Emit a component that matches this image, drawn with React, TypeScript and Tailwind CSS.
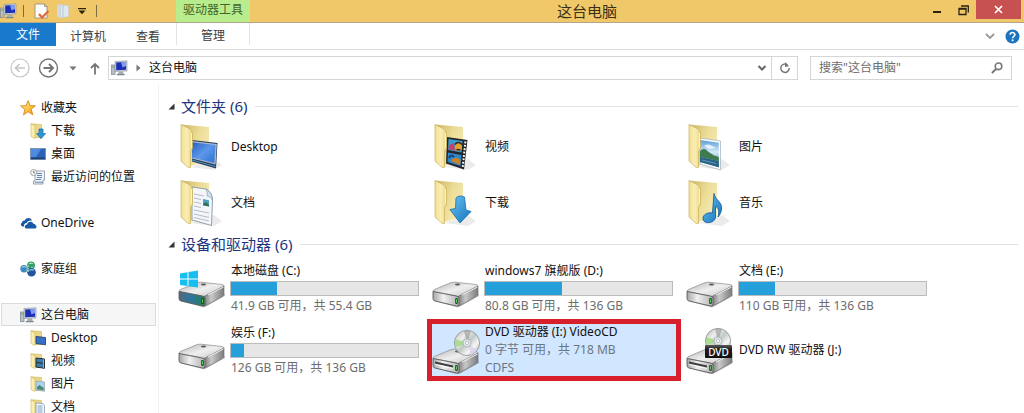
import type { ReactNode } from "react";

/* ---------- small icons ---------- */

function PcIcon() {
  return (
    <svg width="17" height="16" viewBox="0 0 17 16" className="shrink-0" aria-hidden="true">
      <rect x="0.5" y="5" width="3.5" height="9.5" fill="#b9bfc6" stroke="#7d858e" strokeWidth="0.7" />
      <rect x="1.3" y="6.5" width="2" height="1" fill="#5aa84e" />
      <path d="M4 1.5 16 0.8V11L4 11.5Z" fill="#c9ced6" stroke="#8c94a0" strokeWidth="0.6" />
      <path d="M5.2 2.6 15 2V9.8L5.2 10.3Z" fill="#1c2fb4" />
      <path d="M10 2.3 15 2V6L11.5 7.5Z" fill="#7f9cf0" />
      <path d="M8 11.4h4l.8 2.6H6.8Z" fill="#a7adb5" />
      <path d="M5.5 14h8.5l-.8 1.3H6Z" fill="#7e8791" />
    </svg>
  );
}

function StarIcon() {
  return (
    <svg width="17" height="16" viewBox="0 0 17 16" className="shrink-0" aria-hidden="true">
      <defs>
        <linearGradient id="star" x1="0" y1="0" x2="1" y2="1">
          <stop offset="0" stopColor="#fff2a8" />
          <stop offset="0.55" stopColor="#fbc440" />
          <stop offset="1" stopColor="#ef8f1d" />
        </linearGradient>
      </defs>
      <path d="M8.2.7 10 5.6l5.400.2-4.200 3.400 1.600 5.600-4.700-3.100-4.600 3.200 1.400-5.500L.6 6l5.500-.4Z" fill="url(#star)" stroke="#d9861f" strokeWidth="0.9" strokeLinejoin="round" />
    </svg>
  );
}

function DesktopIcon() {
  return (
    <svg width="16" height="16" viewBox="0 0 16 16" className="shrink-0" aria-hidden="true">
      <rect x="0.5" y="2.5" width="15" height="11" fill="#2c62b8" stroke="#7d93b3" />
      <path d="M1 3h10L6 11H1Z" fill="#4f8be0" />
      <rect x="1" y="11.5" width="14" height="1.7" fill="#1d3f73" />
    </svg>
  );
}

function RecentIcon() {
  return (
    <svg width="16" height="16" viewBox="0 0 16 16" className="shrink-0" aria-hidden="true">
      <path d="M4 2h10.5v9H13v4H3.5v-3H5V5Z" fill="#f1f4f8" stroke="#8e98a5" strokeWidth="0.9" />
      <path d="M7 4.500h5M7 6.500h5M7 8.500h5M6 10.500h5M5 13.200h8" stroke="#5078a8" strokeWidth="0.9" />
      <circle cx="3.6" cy="3.6" r="3" fill="#f7f7f7" stroke="#9a9a9a" strokeWidth="0.9" />
      <path d="M3.600 2v1.800h1.400" stroke="#555" strokeWidth="0.8" fill="none" />
    </svg>
  );
}

function CloudIcon() {
  return (
    <svg width="17" height="16" viewBox="0 0 17 16" className="shrink-0" aria-hidden="true">
      <path d="M2.600 11.500C.6 11.200.2 8.600 2 7.800 2 5.800 3.800 5.200 4.800 5.500 6.300 2.300 11 2.300 12 5.700 9.500 4.800 7.300 6 6.800 7.900 4.700 7.700 3.600 9.700 4.100 11.500Z" fill="#1657a6" />
      <path d="M6.300 13.500c-2.300-.3-2-3.900.8-4.100.6-3.300 5.200-3.600 6.200-.7 1.900-.1 2.300 1.100 2.300 1.700 1.700.8 1 3-.7 3.100Z" fill="#1657a6" />
    </svg>
  );
}

function HomegroupIcon() {
  return (
    <svg width="17" height="16" viewBox="0 0 17 16" className="shrink-0" aria-hidden="true">
      <circle cx="11" cy="4.300" r="3.900" fill="#2f9a63" />
      <circle cx="4" cy="7.800" r="3.700" fill="#3f86c6" />
      <circle cx="11.500" cy="11.200" r="4.300" fill="#23549c" />
      <path d="M6 6.500 9 4.500M6.500 9l2.600 1.200M12 7V5.500" stroke="#9adbb4" strokeWidth="1.500" />
      <path d="M9 3c1.200-1.200 3-1.200 4 0M1.800 6.500c.9-1 2.500-1.200 3.600-.4" stroke="#d6f2e2" fill="none" />
      <path d="M9.500 9.500c1-1.200 3.200-1.300 4.400-.2" stroke="#8fc0ef" strokeWidth="1.200" fill="none" />
    </svg>
  );
}

type Kind = "desktop" | "video" | "picture" | "document" | "download" | "music";

function MiniFolder({ kind }: { kind: Kind }) {
  return (
    <svg width="16" height="16" viewBox="0 0 16 16" className="shrink-0" aria-hidden="true">
      <path d="M1 .8 11.500 1.500V14.500H4Z" fill="#ead88a" stroke="#cdb55c" strokeWidth="0.6" />
      <path d="M1 .8 5 3V15.500L1 13.500Z" fill="#fbeeb0" stroke="#cdb55c" strokeWidth="0.6" />
      {kind === "desktop" && <path d="M6 6.500 15.500 7.500V14.800L6 13.500Z" fill="#3470c4" stroke="#27466f" strokeWidth="0.9" />}
      {kind === "video" && (
        <>
          <path d="M6 5 14.500 6V15.300L6 14Z" fill="#3c7ca8" stroke="#23282e" />
          <path d="M13.600 6.500v8.500" stroke="#f2f2f2" strokeWidth="1" strokeDasharray="1 1" />
          <path d="M6.500 9.600 13 10.300" stroke="#23282e" />
        </>
      )}
      {kind === "picture" && (
        <>
          <path d="M6 5 14.500 6V15.300L6 14Z" fill="#a9d3ee" stroke="#9aa6b0" strokeWidth="0.8" />
          <path d="M7 11l2.500-2 4.200 3v2.200L7 13.300Z" fill="#4b8a6f" />
        </>
      )}
      {kind === "document" && (
        <>
          <path d="M6 4 13 4.500 14.500 6.500V15.500L6 14.500Z" fill="#f5f8fc" stroke="#8a97a8" strokeWidth="0.8" />
          <path d="M7.500 7h5M7.500 9h5M7.500 11h5M7.500 13h5" stroke="#6e97c8" strokeWidth="0.9" />
        </>
      )}
      {kind === "download" && <path d="M9 6h4v4.500h2.600L11 15.800 6.500 10.500H9Z" fill="#2c95d8" stroke="#1a6aa8" strokeWidth="0.7" />}
    </svg>
  );
}

/* ---------- large icons ---------- */

function IconDefs() {
  return (
    <svg width="0" height="0" className="absolute" aria-hidden="true">
      <defs>
        <linearGradient id="folderFront" x1="0" y1="0" x2="1" y2="0">
          <stop offset="0" stopColor="#f3df8e" />
          <stop offset="0.5" stopColor="#faedb4" />
          <stop offset="1" stopColor="#ecd682" />
        </linearGradient>
        <linearGradient id="folderBack" x1="0" y1="0" x2="1" y2="0.6">
          <stop offset="0" stopColor="#c9b468" />
          <stop offset="0.55" stopColor="#ecdc94" />
          <stop offset="1" stopColor="#f5eab5" />
        </linearGradient>
        <linearGradient id="screen" x1="0" y1="0" x2="1" y2="1">
          <stop offset="0" stopColor="#2a5fc0" />
          <stop offset="0.5" stopColor="#5c98ea" />
          <stop offset="1" stopColor="#2e6fd2" />
        </linearGradient>
        <linearGradient id="blueFill" x1="0" y1="0" x2="1" y2="1">
          <stop offset="0" stopColor="#6cc4f0" />
          <stop offset="1" stopColor="#1273bd" />
        </linearGradient>
        <linearGradient id="sky" x1="0" y1="0" x2="0" y2="1">
          <stop offset="0" stopColor="#5b9bd8" />
          <stop offset="0.45" stopColor="#d4ebf8" />
          <stop offset="1" stopColor="#2c6b93" />
        </linearGradient>
        <linearGradient id="driveTop" x1="0" y1="0" x2="1" y2="1">
          <stop offset="0" stopColor="#b4b4b4" />
          <stop offset="0.5" stopColor="#efefef" />
          <stop offset="1" stopColor="#c4c4c4" />
        </linearGradient>
        <linearGradient id="driveSide" x1="0" y1="0" x2="1" y2="0">
          <stop offset="0" stopColor="#6f6f6f" />
          <stop offset="0.4" stopColor="#c8c8c8" />
          <stop offset="1" stopColor="#7c7c7c" />
        </linearGradient>
        <linearGradient id="driveFront" x1="0" y1="0" x2="1" y2="0">
          <stop offset="0" stopColor="#a6a6a6" />
          <stop offset="0.4" stopColor="#f0f0f0" />
          <stop offset="1" stopColor="#b0b0b0" />
        </linearGradient>
        <linearGradient id="systemFront" x1="0" y1="0" x2="1" y2="0">
          <stop offset="0" stopColor="#55697a" />
          <stop offset="0.45" stopColor="#2b78a0" />
          <stop offset="1" stopColor="#2f7a55" />
        </linearGradient>
        <linearGradient id="disc" x1="0" y1="0" x2="1" y2="1">
          <stop offset="0" stopColor="#b4b4b4" />
          <stop offset="0.3" stopColor="#ededed" />
          <stop offset="0.5" stopColor="#c0cac3" />
          <stop offset="0.7" stopColor="#f6f6f6" />
          <stop offset="1" stopColor="#a2a2a2" />
        </linearGradient>
        <linearGradient id="discLabel" x1="0" y1="0" x2="0" y2="1">
          <stop offset="0" stopColor="#5a5a5a" />
          <stop offset="0.35" stopColor="#1d1d1d" />
          <stop offset="1" stopColor="#101010" />
        </linearGradient>
      </defs>
    </svg>
  );
}

function FolderIcon({ kind }: { kind: Kind }) {
  return (
    <svg width="48" height="48" viewBox="0 0 48 48" className="shrink-0" aria-hidden="true">
      <path d="M12 44 36 36 44 42 36 47Z" fill="#000" opacity="0.08" />
      <path d="M3 1.500 31 4V38L12 43Z" fill="url(#folderBack)" />
      {kind === "desktop" && (
        <>
          <path d="M14 17 39.500 20 38 45.500 14 38.500Z" fill="#2c3d57" />
          <path d="M14 18 38.800 21 37.500 41.500 14 35.500Z" fill="#a9bcd6" />
          <path d="M14 19.200 37.500 22 36.300 40 14 34.500Z" fill="url(#screen)" />
          <path d="M14 37 37.500 43.500" stroke="#4fb0d8" strokeWidth="0.8" />
        </>
      )}
      {kind === "document" && (
        <>
          <path d="M14 8 28 10Q34 13 34.500 21L33.500 46.500 14 41Z" fill="#f4f6fa" stroke="#8796a6" strokeWidth="0.9" />
          <path d="M28 10Q30 14 29 17 33 17 34.500 21 34 13 28 10Z" fill="#cfe0ee" stroke="#8796a6" strokeWidth="0.6" />
          <path d="M16 15 26 17M16 19 23 20.500M16 23 23 24.500M16 27 23 28.500M16 31 31 34M16 35 31 38.500M16 38.500 31 42" stroke="#b8bec9" strokeWidth="1.200" />
          <path d="M25 20 31 21.200V27.500L25 26.200Z" fill="#4e9fc4" />
          <path d="M25 25 28 23 31 26V27.500L25 26.200Z" fill="#2f7358" />
        </>
      )}
      {kind === "video" && (
        <>
          <path d="M15 14 35.500 17 32 46.500 14 40.500Z" fill="#23262b" />
          <path d="M16.500 16 30.500 18 29.500 29.500 16 27Z" fill="#3b9ad0" />
          <path d="M16 29.500 29.500 32 28.500 43 15.500 39Z" fill="#2f86c8" />
          <path d="M17 22 22 20 23 27.500 16.500 26.500Z" fill="#c0436b" />
          <ellipse cx="26.500" cy="24" rx="3.600" ry="4" fill="#e2a32f" />
          <path d="M23 21.500c2-3 5-2.500 7 0M24.500 26.500l4 .5" stroke="#3a2516" strokeWidth="1.500" fill="none" />
          <path d="M19 38c2-4 6-4 9.500-1l-.5 5Z" fill="#c98427" />
          <path d="M17 35c1.500-3 3-3 5-1" stroke="#173c6b" strokeWidth="1.800" fill="none" />
          <path d="M33.400 18.500 30.700 44.500" stroke="#fff" strokeWidth="2" strokeDasharray="1.800 1.600" />
        </>
      )}
      {kind === "picture" && (
        <>
          <path d="M14 15 34.500 18V47L14 41Z" fill="#fcfdfe" stroke="#a9b6c2" strokeWidth="0.8" />
          <path d="M14 17 32.800 19.800V44.300L14 39Z" fill="url(#sky)" />
          <path d="M14 28Q18 24 22 28.500L28 32.500 32.800 34V38L14 34Z" fill="#3f7b50" />
          <path d="M18 23q4-3 8 0l4 2-7 1Z" fill="#fff" opacity="0.75" />
          <path d="M14 34 32.800 38V44.300L14 39Z" fill="#2a6386" />
          <path d="M16 37 30 40.500" stroke="#6aaac8" strokeWidth="0.8" />
        </>
      )}
      {kind === "download" && (
        <path d="M24 19Q27 15.500 32.500 18L34 31 39 32.500 28 44 18 30.500 23.500 29.500Z" fill="url(#blueFill)" stroke="#1b6dab" strokeWidth="0.8" strokeLinejoin="round" />
      )}
      {kind === "music" && (
        <path d="M28 14.500C29 21 36.500 23 35.500 30 35.200 33 34 36 32 38 33.500 32 32.500 28.500 29.500 27.500L29.500 38C29.500 44 18 46 17 40 16.500 35.500 22 33 26.500 34Z" fill="url(#blueFill)" stroke="#195f9b" strokeWidth="0.9" strokeLinejoin="round" />
      )}
      <path d="M3 1.500 11 5.500Q14.500 7.500 14.500 11V25Q14.500 27 12.500 28V44.500Q11 45.500 9 43.500L3 38Z" fill="url(#folderFront)" stroke="#c9b25f" strokeWidth="0.7" />
      <path d="M13.500 10V25" stroke="#fff8d5" strokeWidth="0.8" />
    </svg>
  );
}

type DriveKind = "system" | "disk" | "dvd" | "dvdrw";

function DriveIcon({ kind }: { kind: DriveKind }) {
  const optical = kind === "dvd" || kind === "dvdrw";
  const discX = kind === "dvd" ? 35 : 32;
  const discY = kind === "dvd" ? 17 : 15;
  return (
    <svg width="48" height="48" viewBox="0 0 48 48" className="shrink-0" aria-hidden="true">
      <g transform={optical ? "translate(0 5)" : undefined}>
        <path d="M2 37 26 43.500 47 32V30L26 39Z" fill="#000" opacity="0.25" />
        <path d="M1 27.500Q1 26 3 25.300L18 19Q20 18 23 18.200L44 20.500Q46.500 21 46 22.500L27 32.500Z" fill="url(#driveTop)" stroke="#8b8b8b" strokeWidth="0.7" />
        <path d="M26 32.500 46 22V30Q46 31.500 44.500 32.300L29 41Q27 42.300 25 42Z" fill="url(#driveSide)" stroke="#666" strokeWidth="0.6" />
        <path d="M1 27.500 24 32Q27 32.500 27 34.500V40Q27 42.500 24.500 42L3 37Q1 36.500 1 34.500Z" fill={kind === "system" ? "url(#systemFront)" : "url(#driveFront)"} stroke="#5b5b5b" strokeWidth="0.9" />
        <path d="M30 31 45.500 23" stroke="#f8f8f8" strokeWidth="0.9" />
        <ellipse cx="25.500" cy="20.500" rx="2.600" ry="1" fill="#5a5a5a" />
        <rect x="23.200" y="34" width="2.600" height="6" rx="1" fill="#1c4a22" />
        <path d="M24.500 35.200v3.500" stroke="#56d34f" strokeWidth="1" />
        {optical && (
          <>
            <path d="M3 30.500 21 34.500V36.500L3 32.500Z" fill="#3b3b3b" />
            <path d="M3 33.500 21 37.500" stroke="#fff" strokeWidth="0.8" />
          </>
        )}
      </g>
      {kind === "system" && (
        <path d="M2 9.500 9.500 8.300V14.500H2ZM10.500 8.100 20 6.500V14.500H10.500ZM2 15.500H9.500V22L2 21ZM10.500 15.500H20V23.500L10.500 22.200Z" fill="#17bff0" />
      )}
      {optical && (
        <g>
          <circle cx={discX} cy={discY} r="12.600" fill="url(#disc)" stroke="#8e8e8e" strokeWidth="0.8" />
          <path d={`M${discX} ${discY}L${discX - 11.5} ${discY - 4}A12.500 12.500 0 0 0 ${discX - 11.5} ${discY + 4}Z`} fill="#8ed86f" opacity="0.7" />
          <path d={`M${discX} ${discY}L${discX - 3} ${discY - 12}A12.500 12.500 0 0 1 ${discX + 4} ${discY - 12}Z`} fill="#8d8d8d" opacity="0.55" />
          <path d={`M${discX} ${discY}L${discX + 4} ${discY + 12}A12.500 12.500 0 0 0 ${discX + 10} ${discY + 7}Z`} fill="#dcd0f0" opacity="0.8" />
          <circle cx={discX} cy={discY} r="4" fill="#e3e6ea" stroke="#a3a8ad" strokeWidth="0.7" />
          <circle cx={discX} cy={discY} r="1.600" fill="#fff" stroke="#9ba0a6" strokeWidth="0.6" />
        </g>
      )}
      {kind === "dvdrw" && (
        <g>
          <rect x="19" y="19" width="27" height="13" rx="1" fill="url(#discLabel)" />
          <text x="32.500" y="29.500" textAnchor="middle" fontSize="10" fontWeight="500" fill="#fff" fontFamily="Noto Sans, sans-serif">DVD</text>
        </g>
      )}
    </svg>
  );
}

/* ---------- data ---------- */

type NavRow = { label: string; icon: ReactNode; child?: boolean; selected?: boolean };

const navGroups: NavRow[][] = [
  [
    { label: "收藏夹", icon: <StarIcon /> },
    { label: "下载", icon: <MiniFolder kind="download" />, child: true },
    { label: "桌面", icon: <DesktopIcon />, child: true },
    { label: "最近访问的位置", icon: <RecentIcon />, child: true },
  ],
  [{ label: "OneDrive", icon: <CloudIcon /> }],
  [{ label: "家庭组", icon: <HomegroupIcon /> }],
  [
    { label: "这台电脑", icon: <PcIcon />, selected: true },
    { label: "Desktop", icon: <MiniFolder kind="desktop" />, child: true },
    { label: "视频", icon: <MiniFolder kind="video" />, child: true },
    { label: "图片", icon: <MiniFolder kind="picture" />, child: true },
    { label: "文档", icon: <MiniFolder kind="document" />, child: true },
  ],
];

const folders: { label: string; kind: Kind }[] = [
  { label: "Desktop", kind: "desktop" },
  { label: "视频", kind: "video" },
  { label: "图片", kind: "picture" },
  { label: "文档", kind: "document" },
  { label: "下载", kind: "download" },
  { label: "音乐", kind: "music" },
];

type Drive = { label: string; kind: DriveKind; used?: number; lines?: string[]; selected?: boolean };

const drives: Drive[] = [
  { label: "本地磁盘 (C:)", kind: "system", used: 24.5, lines: ["41.9 GB 可用，共 55.4 GB"] },
  { label: "windows7 旗舰版 (D:)", kind: "disk", used: 41, lines: ["80.8 GB 可用，共 136 GB"] },
  { label: "文档 (E:)", kind: "disk", used: 19, lines: ["110 GB 可用，共 136 GB"] },
  { label: "娱乐 (F:)", kind: "disk", used: 7, lines: ["126 GB 可用，共 136 GB"] },
  { label: "DVD 驱动器 (I:) VideoCD", kind: "dvd", lines: ["0 字节 可用，共 718 MB", "CDFS"], selected: true },
  { label: "DVD RW 驱动器 (J:)", kind: "dvdrw" },
];

/* ---------- parts ---------- */

function TitleBar() {
  return (
    <header className="flex h-[23px] shrink-0 items-stretch border-b border-[#b5a689] bg-[#f0c869]">
      <div className="flex w-44 items-center">
        <PcIcon />
        <span className="ml-1.5 h-3 w-px bg-[#7c6c43]" />
        <button aria-label="属性" className="ml-2.5">
          <svg width="16" height="16" viewBox="0 0 16 16">
            <path d="M1 1h9.500L13 3.500V15H1Z" fill="#fdfdfd" stroke="#8d8777" strokeWidth="0.8" />
            <path d="M10.500 1v2.500H13" fill="none" stroke="#8d8777" strokeWidth="0.8" />
            <path d="M5 11l3 3.500L14.500 8" fill="none" stroke="#dd6b35" strokeWidth="2.200" />
          </svg>
        </button>
        <button aria-label="新建文件夹" className="ml-1.5">
          <svg width="14" height="16" viewBox="0 0 14 16">
            <path d="M1 1.500 5 1V15L1 13.500Z" fill="#cfd9e0" />
            <path d="M4.500 2 12.500 2.500V13.500L4.500 15Z" fill="#dfe8ee" stroke="#c3cdd3" strokeWidth="0.6" />
            <path d="M7 2v12" stroke="#b5c8d6" />
          </svg>
        </button>
        <button aria-label="自定义快速访问工具栏" className="ml-2">
          <svg width="8" height="8" viewBox="0 0 8 8">
            <path d="M0 1h8v1.200H0ZM.5 3.500h7L4 7.200Z" fill="#2a2312" />
          </svg>
        </button>
        <span className="ml-2.5 h-3 w-px bg-[#7c6c43]" />
      </div>
      <div className="flex w-[74px] items-center justify-center bg-[#b9ec8c] pb-0.5 text-[#41652d]">驱动器工具</div>
      <h1 className="flex flex-1 items-center justify-center text-[15px] leading-5 text-[#3b3014]">这台电脑</h1>
      <div className="flex items-start pr-[3px]">
        <button aria-label="最小化" className="flex h-5 w-[26px] items-center justify-center">
          <svg width="10" height="10" viewBox="0 0 10 10"><path d="M1 6h8v2H1Z" fill="#2a2312" /></svg>
        </button>
        <button aria-label="还原" className="flex h-5 w-[26px] items-center justify-center">
          <svg width="11" height="11" viewBox="0 0 11 11"><path d="M1 3.500h7v6H1ZM1 4h7M3 1h7.300v6.500" fill="none" stroke="#2a2312" strokeWidth="1.300" /></svg>
        </button>
        <button aria-label="关闭" className="flex h-[19px] w-[45px] items-center justify-center bg-[#c75150]">
          <svg width="9" height="9" viewBox="0 0 9 9"><path d="M1 1l7 7M8 1 1 8" stroke="#fff" strokeWidth="1.700" /></svg>
        </button>
      </div>
    </header>
  );
}

function RibbonTabs() {
  return (
    <nav className="flex h-[27px] shrink-0 items-stretch border-b border-[#dcdddf] text-[#3c3c3c]">
      <button className="h-[23px] w-14 bg-[#1979ca] text-white">文件</button>
      <button className="w-16 pt-0.5">计算机</button>
      <button className="w-14 pt-0.5">查看</button>
      <button className="mb-1 w-[74px] border-x border-[#e3e3e3] pt-1">管理</button>
      <div className="ml-auto flex items-center gap-2.5 pr-1">
        <button aria-label="展开功能区">
          <svg width="10" height="8" viewBox="0 0 10 8"><path d="M1 2 5 6 9 2" fill="none" stroke="#999" strokeWidth="1.900" /></svg>
        </button>
        <button aria-label="帮助">
          <svg width="15" height="15" viewBox="0 0 15 15">
            <circle cx="7.500" cy="7.500" r="7" fill="#1b74bf" />
            <path d="M5.200 5.800C5.200 2.800 9.900 2.900 9.900 5.600 9.900 7.400 7.600 7.300 7.600 9.300" fill="none" stroke="#fff" strokeWidth="1.600" />
            <rect x="6.700" y="10.400" width="1.800" height="1.800" fill="#fff" />
          </svg>
        </button>
      </div>
    </nav>
  );
}

function AddressRow() {
  return (
    <div className="flex shrink-0 items-center pt-1.5 pr-3 pb-1 pl-2.5">
      <button aria-label="后退">
        <svg width="20" height="20" viewBox="0 0 20 20" fill="none" stroke="#c6c6c6">
          <circle cx="10" cy="10" r="9" strokeWidth="1.200" />
          <path d="M15 10H5.500M9.500 6l-4 4 4 4" strokeWidth="1.700" />
        </svg>
      </button>
      <button aria-label="前进" className="ml-2">
        <svg width="21" height="20" viewBox="0 0 21 20" fill="none" stroke="#747474">
          <circle cx="10.500" cy="10" r="9" strokeWidth="1.400" />
          <path d="M5.500 10H15M11 6l4 4-4 4" strokeWidth="1.900" />
        </svg>
      </button>
      <button aria-label="最近浏览的位置" className="ml-2.5">
        <svg width="8" height="5" viewBox="0 0 8 5"><path d="M.5.5h7L4 4.500Z" fill="#777" /></svg>
      </button>
      <button aria-label="上移" className="ml-3">
        <svg width="12" height="13" viewBox="0 0 12 13"><path d="M6 12.500V2M2 6l4-4 4 4" fill="none" stroke="#777" strokeWidth="1.800" /></svg>
      </button>
      <div className="ml-[7px] flex h-6 flex-1 items-center border border-[#d6d6d6] pl-0.5">
        <PcIcon />
        <svg width="5" height="8" viewBox="0 0 5 8" className="ml-2" aria-hidden="true"><path d="M.5.500 4.500 4 .5 7.500Z" fill="#777" /></svg>
        <a href="#pc" className="ml-2 flex-1 text-[#111]">这台电脑</a>
        <button aria-label="以前的位置" className="mr-1">
          <svg width="10" height="8" viewBox="0 0 10 8"><path d="M1.500 2 5 5.500 8.500 2" fill="none" stroke="#666" strokeWidth="2" /></svg>
        </button>
        <button aria-label="刷新" className="flex w-[26px] items-center justify-center self-stretch border-l border-[#d6d6d6]">
          <svg width="12" height="12" viewBox="0 0 12 12">
            <path d="M8.500 2.800A4.200 4.200 0 1 0 10.200 6" fill="none" stroke="#777" strokeWidth="1.500" />
            <path d="M6 0v5l4-.8Z" fill="#777" />
          </svg>
        </button>
      </div>
      <label className="ml-3 flex h-6 w-[202px] items-center border border-[#d6d6d6] px-2">
        <input aria-label="搜索" placeholder={'搜索"这台电脑"'} className="w-full min-w-0 flex-1 bg-transparent outline-none placeholder:text-[#6d6d6d]" />
        <svg width="12" height="12" viewBox="0 0 12 12" className="shrink-0" aria-hidden="true">
          <circle cx="7.500" cy="4.300" r="3.300" fill="none" stroke="#777" strokeWidth="1.600" />
          <path d="M5.300 6.700.9 11" stroke="#777" strokeWidth="2" />
        </svg>
      </label>
    </div>
  );
}

function Sidebar() {
  return (
    <nav className="flex w-[159px] shrink-0 flex-col gap-[23px] border-r border-[#eef0f2] pt-3 pr-0.5 pl-px">
      {navGroups.map((group, i) => (
        <ul key={i}>
          {group.map((row) => (
            <li key={row.label}>
              <a
                href="#nav"
                className={`flex h-[23px] items-center border ${row.child ? "gap-[5px] pl-7" : "gap-1 pl-[18px]"} ${
                  row.selected ? "border-[#dcdcdc] bg-[#f6f6f6]" : "border-transparent"
                }`}
              >
                {row.icon}
                <span>{row.label}</span>
              </a>
            </li>
          ))}
        </ul>
      ))}
    </nav>
  );
}

function GroupHeader({ title }: { title: string }) {
  return (
    <h2 className="flex h-6 items-center pr-1.5 text-[15px] leading-5 text-[#20357f]">
      <svg width="7" height="7" viewBox="0 0 7 7" className="mr-1.5 -ml-1.5 shrink-0" aria-hidden="true"><path d="M6.500.5v6H.5Z" fill="#333" /></svg>
      <span>{title}</span>
      <span className="ml-2 h-px flex-1 bg-[#dfe1e4]" />
    </h2>
  );
}

function DriveTile({ drive }: { drive: Drive }) {
  return (
    <button
      className={`flex h-full w-full items-center gap-1 pl-[5px] text-left ${
        drive.selected ? "bg-[#d1e6ff] ring-[5px] ring-[#d8202c] ring-inset" : ""
      }`}
    >
      <DriveIcon kind={drive.kind} />
      {drive.used !== undefined ? (
        <span className="flex w-[189px] flex-col leading-5">
          <span className="pl-px">{drive.label}</span>
          <span className="block h-[15px] border border-[#bcbcbc] bg-[#e6e6e6]">
            <span className="block h-full bg-[#26a0da]" style={{ width: `${drive.used}%` }} />
          </span>
          <span className="pl-px text-[#6d6d6d]">{drive.lines?.[0]}</span>
        </span>
      ) : (
        <span className="flex flex-col pl-px leading-[18px]">
          <span>{drive.label}</span>
          {drive.lines?.map((line) => (
            <span key={line} className="text-[#6d7680]">{line}</span>
          ))}
        </span>
      )}
    </button>
  );
}

export default function App() {
  return (
    <div className="flex h-screen flex-col overflow-hidden bg-white font-['Noto_Sans','Noto_Sans_CJK_SC',sans-serif] text-[12px] leading-[18px] text-[#111]">
      <IconDefs />
      <TitleBar />
      <RibbonTabs />
      <AddressRow />
      <div className="flex min-h-0 flex-1 overflow-hidden">
        <Sidebar />
        <main className="min-w-0 flex-1 pt-2.5 pl-3.5">
          <section>
            <div className="pl-px"><GroupHeader title="文件夹 (6)" /></div>
            <ul className="grid auto-rows-[56px] grid-cols-[repeat(auto-fill,254px)] pt-px">
              {folders.map((folder) => (
                <li key={folder.label}>
                  <button className="flex h-full w-full items-center gap-[5px] pl-[5px] text-left">
                    <FolderIcon kind={folder.kind} />
                    <span>{folder.label}</span>
                  </button>
                </li>
              ))}
            </ul>
          </section>
          <section className="pt-px">
            <div className="pl-px"><GroupHeader title="设备和驱动器 (6)" /></div>
            <ul className="grid auto-rows-[62px] grid-cols-[repeat(auto-fill,254px)] pt-px">
              {drives.map((drive) => (
                <li key={drive.label}>
                  <DriveTile drive={drive} />
                </li>
              ))}
            </ul>
          </section>
        </main>
      </div>
    </div>
  );
}
